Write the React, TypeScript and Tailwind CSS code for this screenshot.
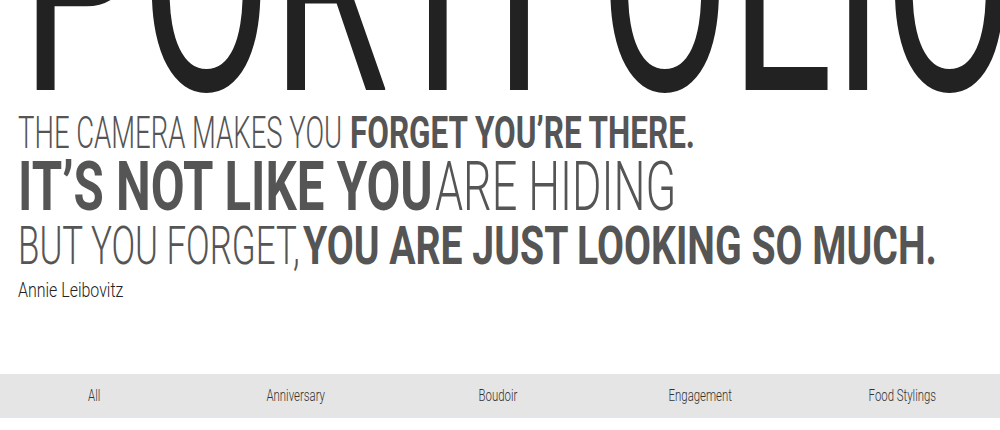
import type { ReactNode } from "react";

type SegProps = {
  width?: string;
  scale: string;
  bold?: boolean;
  children: ReactNode;
};

// a run of quote text, squeezed horizontally to get the condensed look
function Seg({ width = "", scale, bold = false, children }: SegProps) {
  return (
    <span className={`${width} shrink-0 whitespace-nowrap`}>
      <span className={`inline-block origin-left ${scale} ${bold ? "font-bold" : "font-light"}`}>
        {children}
      </span>
    </span>
  );
}

const tabs = ["All", "Anniversary", "Boudoir", "Engagement", "Food Stylings"];

export default function App() {
  return (
    <div className="w-full h-[430px] overflow-hidden bg-white font-['Roboto','Liberation_Sans',sans-serif]">
      {/* Big page title, mostly scrolled off the top */}
      <div className="h-[103px] overflow-hidden">
        <div className="-mt-[162px] ml-[21px] whitespace-nowrap text-[300px] leading-[300px] font-normal text-[#222]">
          <span className="inline-block origin-left scale-x-[0.633]">PORTFOLIO</span>
        </div>
      </div>

      {/* Quote */}
      <div className="pl-[18px] text-[#555]">
        <div className="flex text-[44px] leading-[60px]">
          <Seg width="w-[332px]" scale="scale-x-[0.625]">THE CAMERA MAKES YOU</Seg>
          <Seg scale="scale-x-[0.715]" bold>
            FORGET YOU’RE THERE.
          </Seg>
        </div>
        <div className="flex text-[69px] leading-[47px]">
          <Seg width="w-[417px]" scale="scale-x-[0.713]" bold>
            IT’S NOT LIKE YOU
          </Seg>
          <Seg scale="scale-x-[0.652]">ARE HIDING</Seg>
        </div>
        <div className="flex text-[54px] leading-[71px]">
          <Seg width="w-[285px]" scale="scale-x-[0.646]">BUT YOU FORGET,</Seg>
          <Seg scale="scale-x-[0.725]" bold>
            YOU ARE JUST LOOKING SO MUCH.
          </Seg>
        </div>
        <div className="text-[21px] leading-[18px] font-light text-[#222] whitespace-nowrap">
          <span className="inline-block origin-left scale-x-[0.76]">Annie Leibovitz</span>
        </div>
      </div>

      {/* Category filter bar */}
      <nav className="mt-[75px] h-[44px] bg-[#e5e5e5] overflow-hidden">
        <ul className="-ml-[7px] w-[1010px] h-full grid grid-cols-5 items-center text-[17px] text-[#333]">
          {tabs.map((t) => (
            <li key={t} className="text-center whitespace-nowrap">
              <span className="inline-block scale-x-[0.67] font-light">{t}</span>
            </li>
          ))}
        </ul>
      </nav>
    </div>
  );
}
